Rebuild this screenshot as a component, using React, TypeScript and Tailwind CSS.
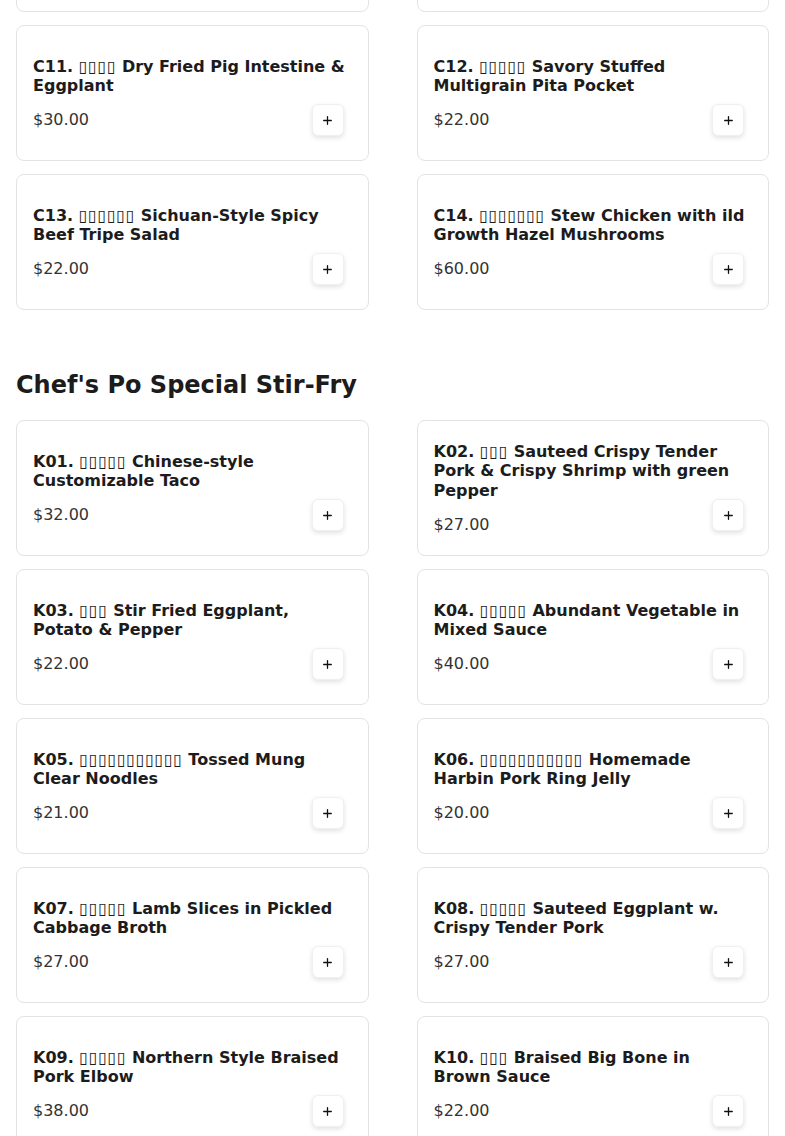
import React from "react";
import { Plus } from "lucide-react";

interface Dish {
  code: string;
  zh: string;
  name: string;
  price: string;
}

const box = (n: number) => "\u25AF".repeat(n);

const coldDishes: Dish[] = [
  { code: "C09", zh: box(4), name: "Cold Dish", price: "$18.00" },
  { code: "C10", zh: box(4), name: "Cold Dish", price: "$18.00" },
  { code: "C11", zh: box(4), name: "Dry Fried Pig Intestine & Eggplant", price: "$30.00" },
  { code: "C12", zh: box(5), name: "Savory Stuffed Multigrain Pita Pocket", price: "$22.00" },
  { code: "C13", zh: box(6), name: "Sichuan-Style Spicy Beef Tripe Salad", price: "$22.00" },
  { code: "C14", zh: box(7), name: "Stew Chicken with ild Growth Hazel Mushrooms", price: "$60.00" },
];

const stirFry: Dish[] = [
  { code: "K01", zh: box(5), name: "Chinese-style Customizable Taco", price: "$32.00" },
  { code: "K02", zh: box(3), name: "Sauteed Crispy Tender Pork & Crispy Shrimp with green Pepper", price: "$27.00" },
  { code: "K03", zh: box(3), name: "Stir Fried Eggplant, Potato & Pepper", price: "$22.00" },
  { code: "K04", zh: box(5), name: "Abundant Vegetable in Mixed Sauce", price: "$40.00" },
  { code: "K05", zh: box(11), name: "Tossed Mung Clear Noodles", price: "$21.00" },
  { code: "K06", zh: box(11), name: "Homemade Harbin Pork Ring Jelly", price: "$20.00" },
  { code: "K07", zh: box(5), name: "Lamb Slices in Pickled Cabbage Broth", price: "$27.00" },
  { code: "K08", zh: box(5), name: "Sauteed Eggplant w. Crispy Tender Pork", price: "$27.00" },
  { code: "K09", zh: box(5), name: "Northern Style Braised Pork Elbow", price: "$38.00" },
  { code: "K10", zh: box(3), name: "Braised Big Bone in Brown Sauce", price: "$22.00" },
];

const DishCard: React.FC<{ dish: Dish }> = ({ dish }) => (
  <div className="relative flex h-[136px] flex-col justify-center rounded-lg border border-[#e3e3e3] bg-white px-4 pt-[19px] pb-4">
    <h3 className="text-base font-bold leading-[1.2] text-[#1c1c1c]">
      {dish.code}. <span className="tracking-[0.6px]">{dish.zh}</span> {dish.name}
    </h3>
    <p className="mt-[13px] text-base leading-6 text-[#333333]">{dish.price}</p>
    {/* add button sits over the card's bottom-right corner */}
    <button className="absolute right-6 bottom-6 flex h-8 w-8 items-center justify-center rounded-md border border-[#f0f0f0] bg-white text-[#111] shadow-[0_2px_5px_rgba(0,0,0,0.12)]">
      <Plus size={13} strokeWidth={2.4} />
    </button>
  </div>
);

const Section: React.FC<{ title?: string; dishes: Dish[]; className?: string }> = ({
  title,
  dishes,
  className,
}) => (
  <section className={className}>
    {title && (
      <h2 className="mb-[19px] text-2xl font-bold leading-8 text-[#1c1c1c]">{title}</h2>
    )}
    <div className="grid grid-cols-2 gap-x-12 gap-y-[13px]">
      {dishes.map((d) => (
        <DishCard key={d.code} dish={d} />
      ))}
    </div>
  </section>
);

export default function App() {
  return (
    <div
      className="min-h-screen overflow-hidden bg-white px-4"
      style={{ fontFamily: '"DejaVu Sans", sans-serif' }}
    >
      <Section dishes={coldDishes} className="-mt-[124px]" />
      <Section title="Chef's Po Special Stir-Fry" dishes={stirFry} className="mt-[59px]" />
    </div>
  );
}
